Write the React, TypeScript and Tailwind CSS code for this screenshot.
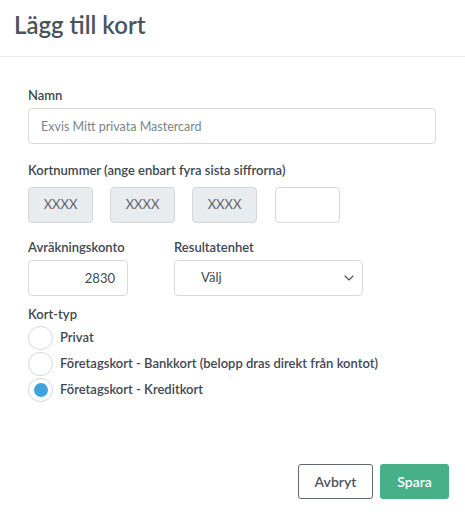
import { ChevronDown } from 'lucide-react';

const label = 'block text-[13px] leading-4 font-semibold text-[#3e4750]';

function Radio({ text, checked }: { text: string; checked?: boolean }) {
  return (
    <label className="flex items-center gap-[7px] h-6">
      <span className="w-[25px] h-6 rounded-full border border-[#d3d7dc] bg-white flex items-center justify-center">
        {checked && <span className="w-[14px] h-[14px] rounded-full bg-[#3ea3df]" />}
      </span>
      <span className="text-[13px] font-semibold text-[#3e4750]">{text}</span>
    </label>
  );
}

export default function App() {
  return (
    <div className="w-[465px] h-[512px] bg-white text-[#3e4750]" style={{ fontFamily: 'Lato, "Open Sans", sans-serif' }}>
      <div className="h-[57px] border-b border-[#e5e7ea] flex items-center px-[14px]">
        <h1 className="text-[24px] font-semibold text-[#4b545c] -mt-[6px]">Lägg till kort</h1>
      </div>

      <div className="px-[28px] pt-[30px]">
        <span className={label}>Namn</span>
        <input
          className="mt-[5px] w-[408px] h-9 rounded-[4px] border border-[#d6dade] px-3 text-[12.5px] placeholder:text-[#7d848b] outline-none"
          placeholder="Exvis Mitt privata Mastercard"
        />

        <span className={label + ' mt-[18px] text-[12.4px]'}>Kortnummer (ange enbart fyra sista siffrorna)</span>
        <div className="mt-[9px] flex gap-[17px]">
          {[0, 1, 2].map((i) => (
            <div key={i} className="w-[65px] h-9 rounded-[4px] border border-[#d3d7dc] bg-[#e9ecef] flex items-center justify-center text-[13px] text-[#5c646b]">
              XXXX
            </div>
          ))}
          <input className="w-[65px] h-9 rounded-[4px] border border-[#d3d7dc] bg-white outline-none ml-[1px]" />
        </div>

        <div className="mt-[16px] flex gap-[46px]">
          <div>
            <span className={label}>Avräkningskonto</span>
            <input
              className="mt-[5px] w-[100px] h-9 rounded-[4px] border border-[#d6dade] px-3 text-right text-[13px] text-[#3e4750] outline-none"
              defaultValue="2830"
            />
          </div>
          <div>
            <span className={label}>Resultatenhet</span>
            <div className="mt-[5px] w-[189px] h-9 rounded-[4px] border border-[#d6dade] flex items-center justify-between pl-[26px] pr-[5px] text-[13px] text-[#3e4750]">
              <span>Välj</span>
              <ChevronDown className="w-4 h-4 text-[#4b545c]" strokeWidth={1.75} />
            </div>
          </div>
        </div>

        <span className={label + ' mt-[10px]'}>Kort-typ</span>
        <div className="mt-[4px] flex flex-col gap-[2px]">
          <Radio text="Privat" />
          <Radio text="Företagskort - Bankkort (belopp dras direkt från kontot)" />
          <Radio text="Företagskort - Kreditkort" checked />
        </div>
      </div>

      <div className="mt-[62px] flex justify-end gap-[7px] pr-[16px]">
        <button className="w-[75px] h-[35px] rounded-[3px] border border-[#5f6870] bg-white text-[14px] font-semibold text-[#4b545c]">
          Avbryt
        </button>
        <button className="w-[69px] h-[35px] rounded-[3px] bg-[#48b089] text-[14px] font-semibold text-white">
          Spara
        </button>
      </div>
    </div>
  );
}
